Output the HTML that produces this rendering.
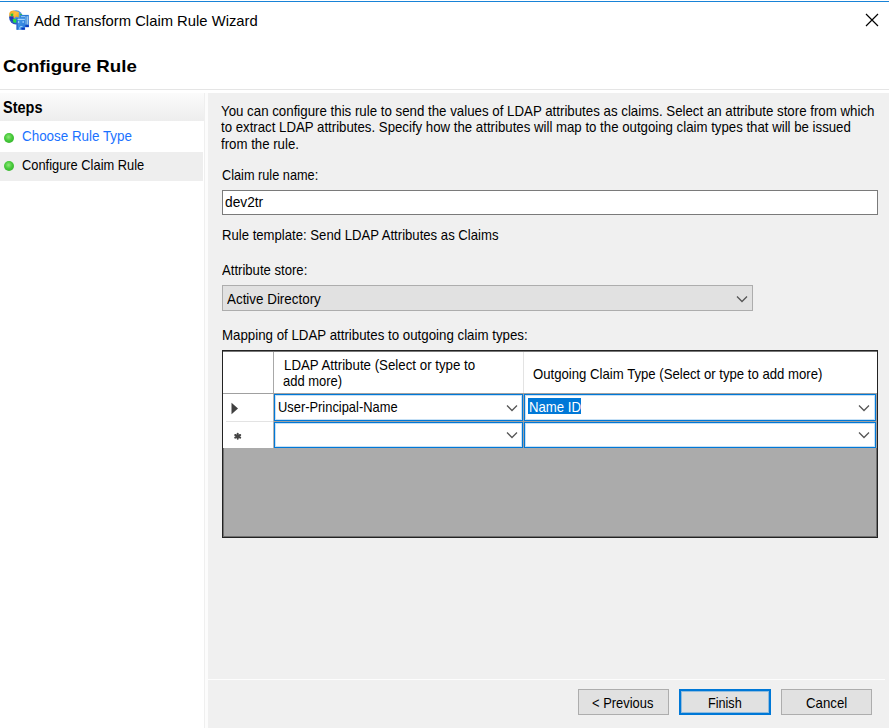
<!DOCTYPE html>
<html><head><meta charset="utf-8">
<style>
*{box-sizing:border-box;margin:0;padding:0}
html,body{width:889px;height:728px;overflow:hidden;background:#fff;font-family:"Liberation Sans",sans-serif;color:#000}
.a{position:absolute;white-space:nowrap;line-height:1}
</style></head><body>
<div class="a" style="left:0;top:1px;width:889px;height:1px;background:#1883d7"></div>
<svg class="a" style="left:0;top:0" width="34" height="34" viewBox="0 0 34 34">
  <defs>
    <radialGradient id="gg" cx="0.6" cy="0.3" r="0.8"><stop offset="0" stop-color="#6ab2e0"/><stop offset="0.6" stop-color="#3a78d0"/><stop offset="1" stop-color="#1e3cb0"/></radialGradient>
    <linearGradient id="bd" x1="0" y1="0" x2="1" y2="1"><stop offset="0" stop-color="#4aa0ea"/><stop offset="1" stop-color="#2a78d8"/></linearGradient>
    <linearGradient id="bd2" x1="0" y1="0" x2="1" y2="1"><stop offset="0" stop-color="#2e86dc"/><stop offset="1" stop-color="#1c62cc"/></linearGradient>
    <linearGradient id="or" x1="0" y1="0" x2="1" y2="1"><stop offset="0" stop-color="#e8a020"/><stop offset="0.5" stop-color="#ffc040"/><stop offset="1" stop-color="#f5a000"/></linearGradient>
  </defs>
  <ellipse cx="16" cy="17.4" rx="6.9" ry="7.1" fill="url(#gg)"/>
  <path d="M9.2 13.5 Q10 10.8 13.5 10.6 L16 11.2 L18.9 12 L18.6 17.6 L16 16.5 L14 18.5 L11.5 16.5 L9.3 16.8 Z" fill="url(#or)"/>
  <path d="M10.6 13.8 L13.3 13.6 L13.2 15.9 L10.8 16 Z" fill="#28c838"/>
  <path d="M9.5 16.5 L13.6 16.2 L13.5 21.8 L10.5 20 Z" fill="#2438b8"/>
  <path d="M12.6 19 L16.6 19 L16.6 22.8 L13.5 22.5 Z" fill="#22e040"/>
  <rect x="19.9" y="14" width="1.9" height="1.2" fill="#30c040"/>
  <rect x="20.2" y="14.9" width="8.6" height="12.2" fill="url(#bd2)"/>
  <rect x="25.5" y="16.2" width="1" height="8.3" fill="#a0d0f0"/>
  <rect x="27.1" y="16.2" width="1" height="8.3" fill="#a0d0f0"/>
  <rect x="21" y="16.2" width="4" height="1" fill="#a0d0f0"/>
  <rect x="25.5" y="25.1" width="3.3" height="2" fill="#0b3cc0"/>
  <rect x="16.6" y="17.9" width="8.5" height="11.9" fill="url(#bd)"/>
  <rect x="16.6" y="17.9" width="0.9" height="11.9" fill="#1a50c0"/>
  <rect x="17.5" y="18.9" width="7.3" height="1" fill="#b0dcff"/>
  <rect x="17.9" y="21.2" width="1.3" height="1.6" fill="#b0dcff"/>
  <rect x="22.5" y="21.2" width="1.3" height="1.6" fill="#b0dcff"/>
  <path d="M19.8 29.6 L19.8 27.6 Q19.8 26.6 21 26.6 L22.5 26.6" fill="none" stroke="#b0dcff" stroke-width="0.9"/>
  <rect x="21.5" y="27.8" width="3.3" height="1.8" fill="#0636c0"/>
</svg>

<div class="a" style="left:34.00px;top:13.30px;font-size:15px;transform:scaleX(0.9867);transform-origin:0 0;">Add Transform Claim Rule Wizard</div>

<svg class="a" style="left:865px;top:13px" width="14" height="14" viewBox="0 0 14 14"><path d="M1 1 L13 13 M13 1 L1 13" stroke="#000" stroke-width="1.2"/></svg>
<div class="a" style="left:3.40px;top:57.61px;font-size:17px;font-weight:bold;transform:scaleX(1.0984);transform-origin:0 0;">Configure Rule</div>

<div class="a" style="left:0;top:89px;width:889px;height:1px;background:#e5e5e5"></div>
<div class="a" style="left:0;top:93px;width:204px;height:635px;background:#fff"></div>
<div class="a" style="left:0;top:93px;width:204px;height:28px;background:linear-gradient(#fbfbfb,#f3f3f3 60%,#ededed)"></div>
<div class="a" style="left:0;top:152px;width:203px;height:29px;background:#eeeeee"></div>
<div class="a" style="left:3.30px;top:100.05px;font-size:16px;font-weight:bold;transform:scaleX(0.9060);transform-origin:0 0;">Steps</div>

<div class="a" style="left:4px;top:132.5px;width:10px;height:10px;border-radius:50%;background:radial-gradient(circle at 45% 40%,#8ee878 0,#46c93a 45%,#2ea826 100%)"></div>
<div class="a" style="left:21.60px;top:127.80px;font-size:15.0px;transform:scaleX(0.8931);transform-origin:0 0;color:#1a72ff">Choose Rule Type</div>

<div class="a" style="left:4px;top:161.3px;width:10px;height:10px;border-radius:50%;background:radial-gradient(circle at 45% 40%,#8ee878 0,#46c93a 45%,#2ea826 100%)"></div>
<div class="a" style="left:21.60px;top:156.80px;font-size:15.0px;transform:scaleX(0.8573);transform-origin:0 0;">Configure Claim Rule</div>

<div class="a" style="left:204px;top:93px;width:1px;height:635px;background:#efefef"></div>
<div class="a" style="left:205px;top:93px;width:3px;height:635px;background:#fcfcfc"></div>
<div class="a" style="left:208px;top:93px;width:681px;height:635px;background:#f0f0f0"></div>
<div class="a" style="left:208px;top:679px;width:677px;height:1px;background:#fdfdfd"></div>
<div class="a" style="left:221.00px;top:102.80px;font-size:15.0px;transform:scaleX(0.8856);transform-origin:0 0;">You can configure this rule to send the values of LDAP attributes as claims. Select an attribute store from which</div>

<div class="a" style="left:221.00px;top:118.80px;font-size:15.0px;transform:scaleX(0.8818);transform-origin:0 0;">to extract LDAP attributes. Specify how the attributes will map to the outgoing claim types that will be issued</div>

<div class="a" style="left:221.00px;top:135.80px;font-size:15.0px;transform:scaleX(0.8818);transform-origin:0 0;">from the rule.</div>

<div class="a" style="left:221.80px;top:166.80px;font-size:15.0px;transform:scaleX(0.8482);transform-origin:0 0;">Claim rule name:</div>

<div class="a" style="left:222px;top:190px;width:656px;height:25px;background:#fff;border:1px solid #7a7a7a"></div>
<div class="a" style="left:224.60px;top:193.80px;font-size:15.0px;transform:scaleX(0.9152);transform-origin:0 0;">dev2tr</div>

<div class="a" style="left:221.80px;top:226.80px;font-size:15.0px;transform:scaleX(0.8758);transform-origin:0 0;">Rule template: Send LDAP Attributes as Claims</div>

<div class="a" style="left:221.90px;top:261.80px;font-size:15.0px;transform:scaleX(0.8746);transform-origin:0 0;">Attribute store:</div>

<div class="a" style="left:222px;top:285px;width:531px;height:26px;background:#e1e1e1;border:1px solid #adadad"></div>
<div class="a" style="left:226.50px;top:290.80px;font-size:15.0px;transform:scaleX(0.8933);transform-origin:0 0;">Active Directory</div>

<svg class="a" style="left:736.0px;top:294.8px" width="12" height="8" viewBox="0 0 12 8"><path d="M1 1.5 L6 6.5 L11 1.5" fill="none" stroke="#555" stroke-width="1.25"/></svg>
<div class="a" style="left:222.00px;top:326.80px;font-size:15.0px;transform:scaleX(0.8863);transform-origin:0 0;">Mapping of LDAP attributes to outgoing claim types:</div>

<div class="a" style="left:222px;top:350px;width:656px;height:188px;background:#ababab;border:1px solid #222;box-shadow:inset 0 0 0 1px rgba(40,40,40,0.45)"></div>
<div class="a" style="left:223px;top:351px;width:654px;height:42px;background:#fff;border-top:1px solid #777"></div>
<div class="a" style="left:273px;top:352px;width:1px;height:41px;background:#a8a8a8"></div>
<div class="a" style="left:523px;top:352px;width:1px;height:41px;background:#e3e3e3"></div>
<div class="a" style="left:223px;top:393px;width:654px;height:1px;background:#a0a0a0"></div>
<div class="a" style="left:283.50px;top:356.80px;font-size:15.0px;transform:scaleX(0.8865);transform-origin:0 0;">LDAP Attribute (Select or type to</div>

<div class="a" style="left:282.60px;top:372.80px;font-size:15.0px;transform:scaleX(0.8653);transform-origin:0 0;">add more)</div>

<div class="a" style="left:532.50px;top:365.80px;font-size:15.0px;transform:scaleX(0.8774);transform-origin:0 0;">Outgoing Claim Type (Select or type to add more)</div>

<div class="a" style="left:223px;top:394px;width:50px;height:54px;background:#fff"></div>
<div class="a" style="left:226px;top:421px;width:47px;height:1px;background:#e3e3e3"></div>
<div class="a" style="left:274px;top:394px;width:603px;height:54px;background:#a0a0a0"></div>
<div class="a" style="left:273px;top:394px;width:1px;height:54px;background:#b4b4b4"></div>
<svg class="a" style="left:231px;top:402px" width="8" height="13" viewBox="0 0 8 13"><path d="M0.5 0.8 L7 6.5 L0.5 12.2 Z" fill="#404040"/></svg>
<svg class="a" style="left:233px;top:432px" width="10" height="9" viewBox="0 0 10 9"><g stroke="#454545" stroke-width="2" stroke-linecap="round"><path d="M4.7 1.8 V6.8"/><path d="M2.2 3 L7.2 5.6"/><path d="M2.2 5.6 L7.2 3"/></g></svg>
<div class="a" style="left:274px;top:394px;width:249px;height:27px;background:#fff;border:1px solid #0078d7;box-shadow:inset 0 0 0 1px rgba(0,120,215,0.22)"></div>
<div class="a" style="left:278.40px;top:398.80px;font-size:15.0px;transform:scaleX(0.8588);transform-origin:0 0;">User-Principal-Name</div>

<svg class="a" style="left:505.6px;top:403.6px" width="12" height="8" viewBox="0 0 12 8"><path d="M1 1.5 L6 6.5 L11 1.5" fill="none" stroke="#555" stroke-width="1.25"/></svg>
<div class="a" style="left:524px;top:394px;width:352px;height:27px;background:#fff;border:1px solid #0078d7;box-shadow:inset 0 0 0 1px rgba(0,120,215,0.22)"></div>
<div class="a" style="left:528px;top:398px;width:53px;height:16px;background:#0078d7"></div>
<div class="a" style="left:529.00px;top:398.80px;font-size:15.0px;transform:scaleX(0.8771);transform-origin:0 0;color:#fff">Name ID</div>

<svg class="a" style="left:858.3px;top:403.6px" width="12" height="8" viewBox="0 0 12 8"><path d="M1 1.5 L6 6.5 L11 1.5" fill="none" stroke="#555" stroke-width="1.25"/></svg>
<div class="a" style="left:274px;top:422px;width:249px;height:26px;background:#fff;border:1px solid #0078d7;box-shadow:inset 0 0 0 1px rgba(0,120,215,0.22)"></div>
<svg class="a" style="left:505.6px;top:430.7px" width="12" height="8" viewBox="0 0 12 8"><path d="M1 1.5 L6 6.5 L11 1.5" fill="none" stroke="#555" stroke-width="1.25"/></svg>
<div class="a" style="left:524px;top:422px;width:352px;height:26px;background:#fff;border:1px solid #0078d7;box-shadow:inset 0 0 0 1px rgba(0,120,215,0.22)"></div>
<svg class="a" style="left:858.3px;top:430.7px" width="12" height="8" viewBox="0 0 12 8"><path d="M1 1.5 L6 6.5 L11 1.5" fill="none" stroke="#555" stroke-width="1.25"/></svg>
<div class="a" style="left:578px;top:689px;width:91px;height:26px;background:#e1e1e1;border:1px solid #adadad"></div>
<div class="a" style="left:591.70px;top:694.80px;font-size:15.0px;transform:scaleX(0.8608);transform-origin:0 0;">&lt; Previous</div>

<div class="a" style="left:679px;top:689px;width:92px;height:26px;background:#e1e1e1;border:2px solid #0078d7;box-shadow:inset 0 0 0 1px rgba(0,120,215,0.35)"></div>
<div class="a" style="left:708.20px;top:694.80px;font-size:15.0px;transform:scaleX(0.8426);transform-origin:0 0;">Finish</div>

<div class="a" style="left:781px;top:689px;width:91px;height:26px;background:#e1e1e1;border:1px solid #adadad"></div>
<div class="a" style="left:805.70px;top:694.80px;font-size:15.0px;transform:scaleX(0.8818);transform-origin:0 0;">Cancel</div>

</body></html>
